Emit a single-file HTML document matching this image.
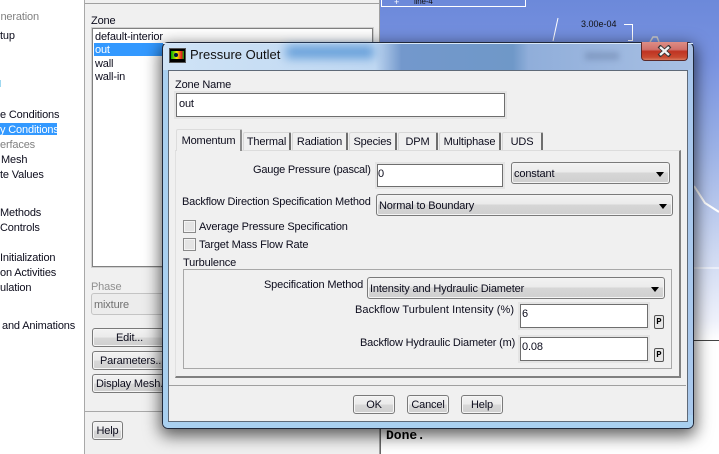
<!DOCTYPE html>
<html><head><meta charset="utf-8">
<style>
html,body{margin:0;padding:0}
body{width:719px;height:454px;overflow:hidden;position:relative;background:#fff;font-family:"Liberation Sans",sans-serif;font-size:11px;letter-spacing:-.15px;color:#0c0c1c}
.a{position:absolute;box-sizing:border-box}
.t{position:absolute;white-space:nowrap;line-height:14px;height:14px;margin-top:1px}
.btn{position:absolute;box-sizing:border-box;border:1px solid #7a7a7a;border-radius:3px;background:linear-gradient(#f2f2f2 0,#ebebeb 48%,#d8d8d8 52%,#cfcfcf 100%);text-align:center;line-height:19px;box-shadow:inset 0 0 0 1px #f6f6f6;white-space:nowrap;overflow:hidden}
.sel{position:absolute;box-sizing:border-box;border:1px solid #7a7a7a;border-radius:3px;background:linear-gradient(#f2f2f2 0,#ebebeb 45%,#d6d6d6 50%,#cfcfcf 100%);line-height:21px;padding:1px 0 0 2px;box-shadow:inset 0 0 0 1px #f4f4f4}
.sel:after{content:"";position:absolute;right:5px;top:9px;border-left:4px solid transparent;border-right:4px solid transparent;border-top:5px solid #000}
.inp{position:absolute;box-sizing:border-box;background:#fff;border:1px solid #6e6e6e;outline:2px solid #e4e4e4;outline-offset:0;padding:3px 0 0 2px;line-height:14px}
.tab{position:absolute;box-sizing:border-box;top:132px;height:18px;background:#f0f0f0;border:1px solid #d8d8d8;border-right:2px solid #6e6e6e;border-bottom:0;border-radius:2px 2px 0 0;text-align:center;line-height:19px}
.cb{position:absolute;box-sizing:border-box;width:13px;height:13px;border:1px solid #8a8a8a;background:#e4e4e4;box-shadow:inset 0 0 0 1px #f4f4f4}
.p{position:absolute;box-sizing:border-box;width:10px;height:14px;border:1px solid #555;border-radius:2px;background:#e6e6e6;font-size:9px;font-weight:bold;line-height:12px;text-align:center;font-family:"Liberation Mono",monospace;color:#000;letter-spacing:0}
</style></head><body>

<!-- graphics area -->
<div class="a" style="left:380px;top:0;width:339px;height:341px;background:linear-gradient(#6c89da 0,#7892e0 60px,#9cb2e6 150px,#c8d4f0 240px,#eef1fb 320px,#fff 341px)"></div>
<div class="a" style="left:381px;top:-2px;width:145px;height:9px;border:1px solid #fff;border-top:0"></div>
<div class="t" style="left:394px;top:-6px;color:#fff;font-size:9px">+</div>
<div class="t" style="left:414px;top:-6px;font-size:8px;color:#111">line-4</div>
<div class="t" style="left:581px;top:16px;font-size:9px;color:#111;letter-spacing:0">3.00e-04</div>
<div class="a" style="left:624px;top:24px;width:9px;height:17px;border-top:1px solid #fff;border-right:1px solid #fff"></div>
<div class="a" style="left:628px;top:40px;width:5px;height:1px;background:#fff"></div>
<svg class="a" style="left:380px;top:0" width="339" height="341"><path d="M178 18 L173 41" stroke="#fff" fill="none"/><path d="M314 186 L325 203 L339 212" stroke="#fff" stroke-width="2" fill="none"/><path d="M314 268 L339 268" stroke="#fff" fill="none"/><path d="M270 42 L273 37 L277 37 L279 42" stroke="#ccc" stroke-width="1.5" fill="none"/></svg>
<div class="a" style="left:380px;top:340px;width:339px;height:1px;background:#444"></div>
<div class="a" style="left:380px;top:341px;width:1px;height:113px;background:#666"></div>
<div class="t" style="left:386px;top:428px;font:bold 13px/14px 'Liberation Mono',monospace;color:#000;letter-spacing:0">Done.</div>

<!-- tree -->
<div class="t" style="left:0;top:9px;color:#808080;width:39px;text-align:right">neration</div>
<div class="t" style="left:0;top:28px">tup</div>
<div class="a" style="left:0;top:80px;width:1px;height:7px;background:#9fd8f0"></div>
<div class="t" style="left:0;top:107px">e Conditions</div>
<div class="a" style="left:0;top:123px;width:57px;height:12px;background:#3399ff"></div>
<div class="t" style="left:0;top:122px;color:#fff">y Conditions</div>
<div class="t" style="left:0;top:137px;color:#808080">erfaces</div>
<div class="t" style="left:1px;top:152px">Mesh</div>
<div class="t" style="left:0;top:167px">te Values</div>
<div class="t" style="left:0;top:205px">Methods</div>
<div class="t" style="left:0;top:220px">Controls</div>
<div class="t" style="left:0;top:250px">Initialization</div>
<div class="t" style="left:0;top:265px">on Activities</div>
<div class="t" style="left:0;top:280px">ulation</div>
<div class="t" style="left:2px;top:318px">and Animations</div>

<!-- panel -->
<div class="a" style="left:84px;top:0;width:296px;height:454px;background:#f0f0f0;border-left:1px solid #a8a8a8;border-right:1px solid #a0a0a0"></div>
<div class="a" style="left:85px;top:3px;width:295px;height:1px;background:#a0a0a0"></div>
<div class="t" style="left:91px;top:13px">Zone</div>
<div class="a" style="left:92px;top:28px;width:281px;height:239px;background:#fff;border:1px solid #808080;outline:1px solid #d0d0d0"></div>
<div class="a" style="left:94px;top:43px;width:277px;height:13px;background:#3399ff"></div>
<div class="t" style="left:95px;top:29px">default-interior</div>
<div class="t" style="left:95px;top:42px;color:#fff">out</div>
<div class="t" style="left:95px;top:56px">wall</div>
<div class="t" style="left:95px;top:69px">wall-in</div>
<div class="t" style="left:91px;top:279px;color:#909090">Phase</div>
<div class="a" style="left:91px;top:293px;width:200px;height:22px;border:1px solid #c4c4c4;border-radius:3px;background:#ececec"></div>
<div class="t" style="left:94px;top:297px;color:#707070">mixture</div>
<div class="btn" style="left:92px;top:328px;width:110px;height:19px;text-align:left;padding-left:23px">Edit...</div>
<div class="btn" style="left:92px;top:351px;width:110px;height:19px;text-align:left;padding-left:7px">Parameters...</div>
<div class="btn" style="left:92px;top:374px;width:110px;height:19px;text-align:left;padding-left:3px">Display Mesh...</div>
<div class="a" style="left:85px;top:411px;width:295px;height:1px;background:#a8a8a8"></div>
<div class="btn" style="left:92px;top:421px;width:31px;height:19px">Help</div>

<!-- dialog -->
<div class="a" style="left:162px;top:42px;width:532px;height:387px;border-radius:6px;border:1px solid #20283a;box-shadow:0 5px 16px 2px rgba(0,0,0,.62);background:linear-gradient(90deg,#cfe3f6 0,#c0d8f2 40%,#7398cc 45%,#6f98c8 66%,#90aeda 69%,#a8c0e4 100%)"></div>
<div class="a" style="left:163px;top:43px;width:530px;height:1px;background:#d8e8f8"></div>
<div class="a" style="left:163px;top:400px;width:530px;height:28px;background:#a9d0f0;border-radius:0 0 5px 5px"></div>
<div class="a" style="left:163px;top:70px;width:530px;height:345px;background:linear-gradient(90deg,#a9d0f0 0,#a9d0f0 5px,transparent 5px,transparent 525px,#a9c8ec 525px)"></div>
<div class="a" style="left:286px;top:46px;width:88px;height:12px;background:rgba(55,130,205,.7);filter:blur(5px)"></div>
<div class="a" style="left:585px;top:52px;width:34px;height:8px;background:rgba(60,80,120,.25);filter:blur(3px)"></div>
<div class="a" style="left:169px;top:48px;width:17px;height:15px;background:#000;border:1px solid #555"></div>
<div class="a" style="left:171px;top:51px;width:13px;height:8px;background:linear-gradient(90deg,#0a0 0,#ee0 45%,#e22 80%,#0a0)"></div>
<div class="a" style="left:174px;top:53px;width:4px;height:4px;background:#014;border-radius:50%"></div>
<div class="t" style="left:190px;top:47px;font-size:13px;color:#111;letter-spacing:0">Pressure Outlet</div>
<div class="a" style="left:641px;top:42px;width:47px;height:19px;border:1px solid #5a2a2a;border-top:0;border-radius:0 0 4px 4px;background:linear-gradient(#dd8d85 0,#d0706a 42%,#bf3322 52%,#c84a30 85%,#d87a60 100%)"></div>
<svg class="a" style="left:657px;top:45px" width="15" height="12"><path d="M2 1 L13 11 M13 1 L2 11" stroke="#333" stroke-width="4"/><path d="M3 2 L12 10 M12 2 L3 10" stroke="#f2f2f2" stroke-width="2.4"/></svg>

<div class="a" style="left:168px;top:70px;width:520px;height:352px;background:#f0f0f0;border:1px solid #5f6a78"></div>
<div class="t" style="left:175px;top:77px">Zone Name</div>
<div class="inp" style="left:176px;top:93px;width:329px;height:24px">out</div>

<div class="a" style="left:175px;top:150px;width:506px;height:228px;border-top:1px solid #dcdcdc;border-right:2px solid #808080;border-bottom:2px solid #808080;border-left:1px solid #e0e0e0"></div>
<div class="tab" style="left:176px;top:129px;width:66px;height:22px;line-height:22px;z-index:2;border-right:2px solid #8c8c8c;border-left:1px solid #dcdcdc;border-top:1px solid #dcdcdc">Momentum</div>
<div class="tab" style="left:243px;width:48px">Thermal</div>
<div class="tab" style="left:292px;width:56px">Radiation</div>
<div class="tab" style="left:349px;width:48px">Species</div>
<div class="tab" style="left:398px;width:40px">DPM</div>
<div class="tab" style="left:439px;width:62px">Multiphase</div>
<div class="tab" style="left:502px;width:41px">UDS</div>

<div class="t" style="left:253px;top:162px;letter-spacing:-.2px">Gauge Pressure (pascal)</div>
<div class="inp" style="left:377px;top:164px;width:126px;height:23px;padding:2px 0 0 0">0</div>
<div class="sel" style="left:511px;top:162px;width:159px;height:22px">constant</div>
<div class="t" style="left:182px;top:194px;letter-spacing:-.18px">Backflow Direction Specification Method</div>
<div class="sel" style="left:376px;top:194px;width:297px;height:22px">Normal to Boundary</div>
<div class="cb" style="left:183px;top:220px"></div>
<div class="t" style="left:199px;top:219px">Average Pressure Specification</div>
<div class="cb" style="left:183px;top:238px"></div>
<div class="t" style="left:199px;top:237px">Target Mass Flow Rate</div>
<div class="t" style="left:183px;top:255px">Turbulence</div>
<div class="a" style="left:183px;top:269px;width:489px;height:100px;border:1px solid #a8a8a8"></div>
<div class="t" style="left:264px;top:277px">Specification Method</div>
<div class="sel" style="left:367px;top:277px;width:298px;height:22px">Intensity and Hydraulic Diameter</div>
<div class="t" style="left:355px;top:302px;letter-spacing:.06px">Backflow Turbulent Intensity (%)</div>
<div class="inp" style="left:520px;top:304px;width:128px;height:24px;padding:2px 0 0 1px">6</div>
<div class="p" style="left:654px;top:315px">P</div>
<div class="t" style="left:360px;top:335px;letter-spacing:-.16px">Backflow Hydraulic Diameter (m)</div>
<div class="inp" style="left:520px;top:337px;width:128px;height:24px;padding:2px 0 0 1px">0.08</div>
<div class="p" style="left:654px;top:348px">P</div>
<div class="a" style="left:169px;top:385px;width:517px;height:1px;background:#a0a0a0"></div>
<div class="btn" style="left:353px;top:395px;width:42px;height:19px">OK</div>
<div class="btn" style="left:407px;top:395px;width:42px;height:19px">Cancel</div>
<div class="btn" style="left:461px;top:395px;width:42px;height:19px">Help</div>
</body></html>
